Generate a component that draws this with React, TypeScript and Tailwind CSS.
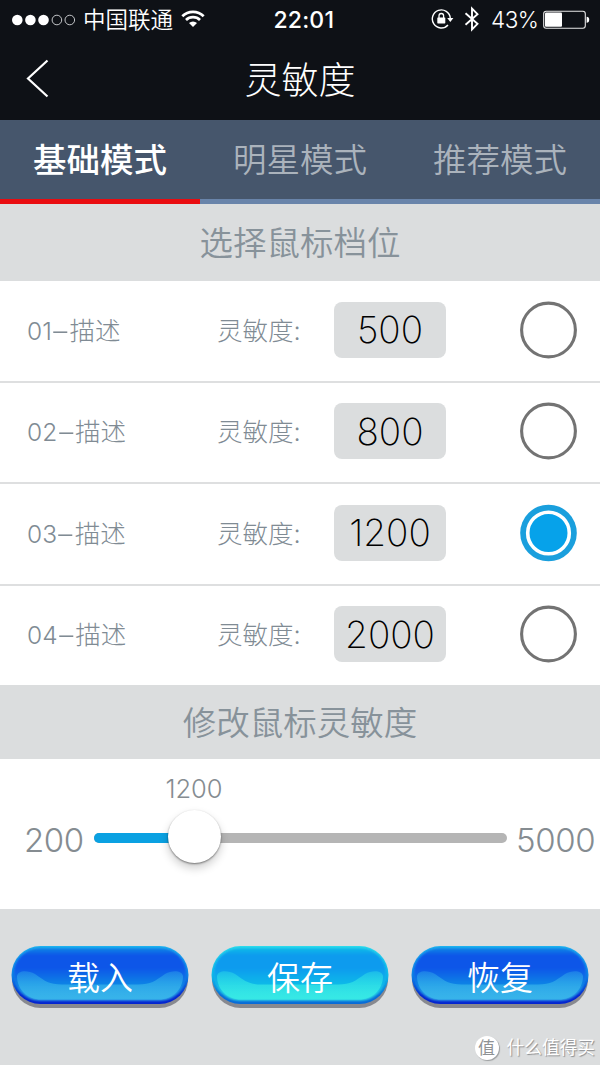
import { useState } from 'react'

const tabs = ['基础模式', '明星模式', '推荐模式']

const levels = [
  { no: '01', label: '描述', value: 500 },
  { no: '02', label: '描述', value: 800 },
  { no: '03', label: '描述', value: 1200 },
  { no: '04', label: '描述', value: 2000 },
]

const MIN = 200
const MAX = 5000

function StatusBar() {
  return (
    <div className="flex h-10 items-center pl-3 pr-[10px] text-white">
      <div className="flex w-[262px] items-center">
        <svg width="64" height="12" viewBox="0 0 64 12" className="shrink-0">
          <circle cx="5.3" cy="6" r="5.3" fill="#fff" />
          <circle cx="18.4" cy="6" r="5.3" fill="#fff" />
          <circle cx="31.5" cy="6" r="5.3" fill="#fff" />
          <circle cx="44.9" cy="6" r="4.8" fill="none" stroke="#c4c6c9" />
          <circle cx="57.8" cy="6" r="4.8" fill="none" stroke="#c4c6c9" />
        </svg>
        <span className="ml-[7px] text-[22.5px] font-[350] leading-none whitespace-nowrap">中国联通</span>
        <svg width="24" height="18" viewBox="0 0 24 18" className="ml-2 mt-[-2px] shrink-0">
          <path d="M1.3 6.2a15.2 15.2 0 0 1 21.4 0" fill="none" stroke="#fff" strokeWidth="2.7" />
          <path d="M5 10a10 10 0 0 1 14 0" fill="none" stroke="#fff" strokeWidth="2.7" />
          <path d="M12 17l-4-4a5.8 5.8 0 0 1 8 0z" fill="#fff" />
        </svg>
      </div>
      <span className="w-[158px] text-[23px] font-medium leading-none tracking-[0.2px]">22:01</span>
      <svg width="24" height="22" viewBox="0 0 24 22" className="mt-[-2px] shrink-0">
        <path d="M19.3 10.2A9 9 0 1 0 17 17" fill="none" stroke="#fff" strokeWidth="1.4" />
        <path d="M16.2 10h6.2l-3.1 4z" fill="#fff" />
        <rect x="6.3" y="9.4" width="8" height="6" rx="0.6" fill="#fff" />
        <path d="M8 10V7.8a2.3 2.3 0 0 1 4.6 0V10" fill="none" stroke="#fff" strokeWidth="1.3" />
      </svg>
      <svg width="16" height="26" viewBox="0 0 16 26" className="ml-[9px] mt-[-2px] shrink-0">
        <path d="M1.5 7.3l12 10.6L8 23.4V2.6l5.5 5.5L1.5 18.7" fill="none" stroke="#fff" strokeWidth="1.9" />
      </svg>
      <span className="ml-[11px] w-[52px] text-[22.5px] font-light leading-none tracking-[-0.6px] whitespace-nowrap">43%</span>
      <svg width="47" height="20" viewBox="0 0 47 20" className="mt-[-1px] shrink-0">
        <rect x="0.7" y="1.2" width="41.6" height="17" rx="2.5" fill="none" stroke="#e8e8e8" strokeWidth="1.1" />
        <rect x="2" y="2.6" width="17" height="14.2" rx="1" fill="#fff" />
        <path d="M43.6 6.8q2.6 0 2.6 3t-2.6 3z" fill="#fff" />
      </svg>
    </div>
  )
}

function SectionTitle({ children }: { children: string }) {
  return (
    <h2 className="flex h-full items-center justify-center pt-[3px] text-[33.5px] font-[350] leading-none text-[#87929a]">
      {children}
    </h2>
  )
}

function Radio({ checked }: { checked: boolean }) {
  return (
    <svg width="58" height="58" viewBox="0 0 58 58">
      {checked ? (
        <>
          <circle cx="29.5" cy="29" r="28.3" fill="#1a9fdd" />
          <circle cx="29.5" cy="29" r="20.8" fill="#06a2ea" stroke="#fff" strokeWidth="3.6" />
        </>
      ) : (
        <circle cx="29.5" cy="29" r="26.9" fill="#fff" stroke="#737373" strokeWidth="3.1" />
      )}
    </svg>
  )
}

function GlossyButton({ id, label, colors }: { id: string; label: string; colors: string[] }) {
  const [rim, top, middle, bottom, edge] = colors
  return (
    <button className="grid h-[64px] w-[178px] place-items-center">
      <svg width="178" height="64" viewBox="0 0 178 64" className="col-start-1 row-start-1">
        <defs>
          <linearGradient id={`${id}-body`} x1="0" y1="0" x2="0" y2="1">
            <stop offset="0" stopColor={middle} />
            <stop offset="0.14" stopColor={top} />
            <stop offset="0.38" stopColor={top} />
            <stop offset="0.72" stopColor={middle} />
            <stop offset="1" stopColor={bottom} />
          </linearGradient>
          <linearGradient id={`${id}-rim`} x1="0" y1="0" x2="0" y2="1">
            <stop offset="0" stopColor={rim} />
            <stop offset="0.5" stopColor={middle} />
            <stop offset="0.85" stopColor={edge} />
          </linearGradient>
          <linearGradient id={`${id}-gloss`} x1="0" y1="0" x2="0" y2="1">
            <stop offset="0" stopColor={bottom} stopOpacity="0.35" />
            <stop offset="0.5" stopColor={bottom} stopOpacity="0.7" />
            <stop offset="1" stopColor={bottom} stopOpacity="0.9" />
          </linearGradient>
          <filter id={`${id}-soft`} x="-5%" y="-10%" width="110%" height="120%">
            <feGaussianBlur stdDeviation="0.9" />
          </filter>
        </defs>
        <rect x="1" y="6" width="176" height="57" rx="28.5" fill="#88898f" />
        <rect x="0.5" y="1" width="177" height="58" rx="29" fill={`url(#${id}-rim)`} />
        <rect x="2.5" y="3" width="173" height="52.5" rx="26.2" fill={`url(#${id}-body)`} filter={`url(#${id}-soft)`} />
        <path
          d="M6 31C7 25 17 25 24 29C34 36 38 39.5 51 39.5H127C140 39.5 144 36 154 29C161 25 171 25 172 31C172 45 161 54.5 148 54.5H30C17 54.5 6 45 6 31Z"
          fill={`url(#${id}-gloss)`}
        />
      </svg>
      <span className="z-10 col-start-1 row-start-1 pt-[3px] text-[33px] font-[350] leading-none text-white">{label}</span>
    </button>
  )
}

const blue = ['#22b5f0', '#0756e8', '#1187e5', '#38b4ea', '#0424d0']
const cyan = ['#31dcec', '#079bee', '#12bce8', '#37e9e5', '#086bd8']

export default function App() {
  const [tab, setTab] = useState(0)
  const [selected, setSelected] = useState(2)
  const current = levels[selected].value
  // the thumb is 53px wide and stays inside the 413px track
  const thumbLeft = ((current - MIN) / (MAX - MIN)) * 360 - 1

  return (
    <div className="flex h-[1065px] w-[600px] flex-col overflow-hidden bg-white font-[Inter,'Noto_Sans_CJK_SC',sans-serif]">
      <header className="h-[120px] bg-[#0e1116] text-white">
        <StatusBar />
        <div className="grid h-[78px] grid-cols-[1fr_auto_1fr] items-center">
          <svg width="24" height="40" viewBox="0 0 24 40" className="ml-[26px]">
            <path d="M21.5 1.5L2 19.5l19.5 18" fill="none" stroke="#fff" strokeWidth="2.2" />
          </svg>
          <h1 className="pt-0.5 text-[37px] font-light leading-none">灵敏度</h1>
        </div>
      </header>

      <nav className="grid h-[84px] grid-cols-3 bg-[#46566c]">
        {tabs.map((name, i) => (
          <button
            key={name}
            onClick={() => setTab(i)}
            className={
              i === tab
                ? 'border-b-[5px] border-[#e90c10] pt-[3px] text-[33.5px] font-medium leading-none text-white'
                : 'border-b-[5px] border-[#6984aa] pt-[3px] text-[33.5px] font-[350] leading-none text-[#abb3bc]'
            }
          >
            {name}
          </button>
        ))}
      </nav>

      <div className="h-[77px] bg-[#dbddde]">
        <SectionTitle>选择鼠标档位</SectionTitle>
      </div>

      <ul className="flex h-[404px] flex-col divide-y-2 divide-[#dedfe0]">
        {levels.map((level, i) => (
          <li
            key={level.no}
            onClick={() => setSelected(i)}
            className="grid flex-1 grid-cols-[190px_117px_112px_1fr] items-center pb-[2px] pl-[27px] pr-[23px] text-[25.5px] font-light text-[#808b94]"
          >
            <span className="pt-[2px]">
              <span className="text-[24.5px]">{level.no}</span>
              <span className="mx-[1.5px] inline-block scale-x-110 px-px">–</span>
              {level.label}
            </span>
            <span className="pt-[2px]">灵敏度:</span>
            <span className="flex h-14 items-center justify-center rounded-lg bg-[#dbddde] text-[37px] font-extralight leading-none text-black">
              {level.value}
            </span>
            <span className="justify-self-end">
              <Radio checked={i === selected} />
            </span>
          </li>
        ))}
      </ul>

      <div className="h-[74px] bg-[#dbddde]">
        <SectionTitle>修改鼠标灵敏度</SectionTitle>
      </div>

      <section className="flex h-[150px] items-start pt-[52px] font-light text-[#858c91]">
        <span className="w-[94px] pt-[13px] pl-6 text-[33px] leading-none tracking-[-0.4px]">{MIN}</span>
        <div className="relative mt-[22px] h-[10px] w-[413px] rounded-full bg-[#b5b5b5]">
          <div className="h-full rounded-full bg-[#0aa1e2]" style={{ width: thumbLeft + 26 }} />
          <div
            className="absolute top-[-23px] size-[53px] rounded-full bg-white shadow-[0_5px_10px_rgba(0,0,0,0.2),0_1px_2px_rgba(0,0,0,0.45)]"
            style={{ left: thumbLeft }}
          />
          <span
            className="absolute top-[-57px] w-20 text-center text-[25.5px] leading-none"
            style={{ left: thumbLeft - 14 }}
          >
            {current}
          </span>
        </div>
        <span className="pt-[13px] pl-[9px] text-[33px] leading-none tracking-[-0.4px]">{MAX}</span>
      </section>

      <footer className="flex flex-1 flex-col justify-between bg-[#dbddde] px-[11px] pt-[35.5px] pb-[5px]">
        <div className="flex justify-between">
          <GlossyButton id="load" label="载入" colors={blue} />
          <GlossyButton id="save" label="保存" colors={cyan} />
          <GlossyButton id="restore" label="恢复" colors={blue} />
        </div>
        <div className="flex items-center justify-end gap-2 text-white">
          <span className="grid size-6 place-items-center rounded-full bg-white text-[17px] leading-none text-[#8f9294] shadow-[1px_1px_1px_#9b9d9f]">
            值
          </span>
          <span className="mr-[-6px] text-[17.7px] leading-none [text-shadow:1px_1px_1px_#8b8d8f]">什么值得买</span>
        </div>
      </footer>
    </div>
  )
}
